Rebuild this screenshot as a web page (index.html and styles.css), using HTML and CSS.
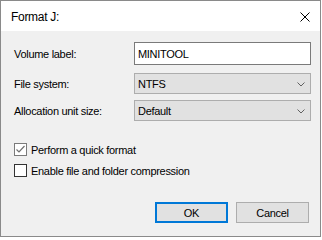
FILE: index.html
```html
<!DOCTYPE html>
<html>
<head>
<meta charset="utf-8">
<link rel="stylesheet" href="styles.css">
</head>
<body>
<div class="window">
  <div class="titlebar">
    <span class="title">Format J:</span>
    <svg class="close" width="10" height="10" viewBox="0 0 10 10"><path d="M0.5 0.5 L9.5 9.5 M9.5 0.5 L0.5 9.5" stroke="#000" stroke-width="1" fill="none"/></svg>
  </div>
  <div class="content">
    <div class="form">
      <div class="label">Volume label:</div>
      <div class="textbox">MINITOOL</div>
      <div class="label">File system:</div>
      <div class="select"><span>NTFS</span><svg class="chev" width="8" height="5" viewBox="0 0 8 5"><path d="M0.5 0.5 L4 4 L7.5 0.5" stroke="#606060" stroke-width="1" fill="none"/></svg></div>
      <div class="label">Allocation unit size:</div>
      <div class="select"><span>Default</span><svg class="chev" width="8" height="5" viewBox="0 0 8 5"><path d="M0.5 0.5 L4 4 L7.5 0.5" stroke="#606060" stroke-width="1" fill="none"/></svg></div>
    </div>
    <div class="checks">
      <div class="check">
        <span class="box box-checked"><svg width="11" height="11" viewBox="0 0 11 11"><path d="M1.5 5.5 L4 8 L9.5 2" stroke="#707070" stroke-width="1.2" fill="none"/></svg></span>
        <span class="ctext">Perform a quick format</span>
      </div>
      <div class="check">
        <span class="box"></span>
        <span class="ctext">Enable file and folder compression</span>
      </div>
    </div>
    <div class="buttons">
      <div class="btn btn-default">OK</div>
      <div class="btn">Cancel</div>
    </div>
  </div>
</div>
</body>
</html>
```
FILE: styles.css
```css
html, body {
  margin: 0;
  padding: 0;
  background: #ffffff;
}
body {
  font-family: "Liberation Sans", Arial, sans-serif;
  font-size: 11px;
  letter-spacing: -0.3px;
  color: #000;
}
.window {
  width: 321px;
  height: 237px;
  box-sizing: border-box;
  border: 1px solid #8a8a8a;
  background: #f0f0f0;
  display: flex;
  flex-direction: column;
}
.titlebar {
  height: 30px;
  background: #ffffff;
  display: flex;
  align-items: center;
  justify-content: space-between;
  padding: 0 10px 0 10px;
  box-sizing: border-box;
}
.title {
  font-size: 12px;
  letter-spacing: -0.3px;
  padding-top: 2px;
}
.close {
  display: block;
  margin-top: 1px;
}
.content {
  flex: 1;
  padding: 11px 9px 0 12px;
  display: flex;
  flex-direction: column;
}
.form {
  display: grid;
  grid-template-columns: 121px 177px;
  grid-template-rows: 23px 21px 21px;
  row-gap: 0;
}
.form > :nth-child(3), .form > :nth-child(4) { margin-top: 8px; }
.form > :nth-child(5), .form > :nth-child(6) { margin-top: 6px; }
.form { grid-template-rows: 23px 29px 27px; }
.label {
  display: flex;
  align-items: center;
  padding-left: 1px;
}
.form > :nth-child(3), .form > :nth-child(5) { align-items: center; }
.textbox {
  box-sizing: border-box;
  height: 23px;
  border: 1px solid #7a7a7a;
  background: #fff;
  padding-left: 3px;
  display: flex;
  align-items: center;
}
.select {
  box-sizing: border-box;
  height: 21px;
  border: 1px solid #adadad;
  background: #e1e1e1;
  padding: 0 5px 0 3px;
  display: flex;
  align-items: center;
  justify-content: space-between;
}
.chev {
  display: block;
  margin-top: 2px;
}
.checks {
  margin-top: 22px;
  display: flex;
  flex-direction: column;
  gap: 8px;
  padding-left: 1px;
}
.check {
  display: flex;
  align-items: center;
  height: 13px;
}
.box {
  width: 13px;
  height: 13px;
  box-sizing: border-box;
  border: 1px solid #333333;
  background: #fff;
  display: flex;
  align-items: center;
  justify-content: center;
}
.box-checked {
  border-color: #7a7a7a;
}
.box svg { display: block; }
.ctext {
  margin-left: 4px;
}
.buttons {
  margin-top: 25px;
  display: flex;
  justify-content: flex-end;
  gap: 8px;
  padding-right: 2px;
}
.btn {
  width: 73px;
  height: 21px;
  box-sizing: border-box;
  border: 1px solid #adadad;
  background: #e1e1e1;
  display: flex;
  align-items: center;
  justify-content: center;
}
.btn-default {
  border: 2px solid #0078d7;
}
```
